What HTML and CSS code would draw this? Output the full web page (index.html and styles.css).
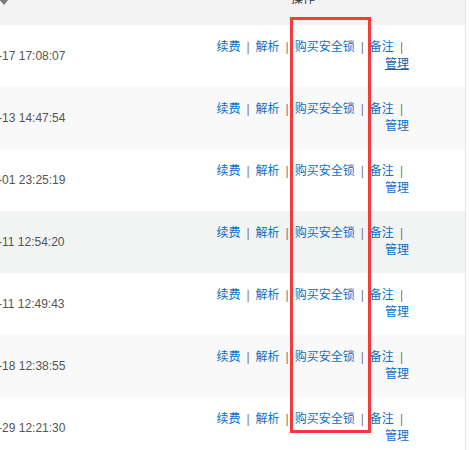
FILE: index.html
```html
<!DOCTYPE html>
<html lang="zh-CN">

<head>
    <meta charset="UTF-8">
    <title>域名列表</title>
    <link rel="stylesheet" href="styles.css">
</head>

<body>

    <div class="list">
        <!-- header, scrolled up and left -->
        <div class="list-head">
            <div class="col-date"><span class="caret"></span></div>
            <div class="col-ops"><span class="head-label">操作</span></div>
        </div>

        <div class="list-row">
            <div class="col-date">2019-08-17 17:08:07</div>
            <div class="col-ops"><a href="#">续费</a><span class="sep">|</span><a href="#">解析</a><span class="sep">|</span><a href="#">购买安全锁</a><span class="sep">|</span><a href="#">备注</a><span class="sep">|</span><a href="#" class="hover">管理</a></div>
        </div>
        <div class="list-row even">
            <div class="col-date">2019-08-13 14:47:54</div>
            <div class="col-ops"><a href="#">续费</a><span class="sep">|</span><a href="#">解析</a><span class="sep">|</span><a href="#">购买安全锁</a><span class="sep">|</span><a href="#">备注</a><span class="sep">|</span><a href="#">管理</a></div>
        </div>
        <div class="list-row">
            <div class="col-date">2019-08-01 23:25:19</div>
            <div class="col-ops"><a href="#">续费</a><span class="sep">|</span><a href="#">解析</a><span class="sep">|</span><a href="#">购买安全锁</a><span class="sep">|</span><a href="#">备注</a><span class="sep">|</span><a href="#">管理</a></div>
        </div>
        <div class="list-row active">
            <div class="col-date">2019-07-11 12:54:20</div>
            <div class="col-ops"><a href="#">续费</a><span class="sep">|</span><a href="#">解析</a><span class="sep">|</span><a href="#">购买安全锁</a><span class="sep">|</span><a href="#">备注</a><span class="sep">|</span><a href="#">管理</a></div>
        </div>
        <div class="list-row">
            <div class="col-date">2019-07-11 12:49:43</div>
            <div class="col-ops"><a href="#">续费</a><span class="sep">|</span><a href="#">解析</a><span class="sep">|</span><a href="#">购买安全锁</a><span class="sep">|</span><a href="#">备注</a><span class="sep">|</span><a href="#">管理</a></div>
        </div>
        <div class="list-row even">
            <div class="col-date">2019-06-18 12:38:55</div>
            <div class="col-ops"><a href="#">续费</a><span class="sep">|</span><a href="#">解析</a><span class="sep">|</span><a href="#">购买安全锁</a><span class="sep">|</span><a href="#">备注</a><span class="sep">|</span><a href="#">管理</a></div>
        </div>
        <div class="list-row">
            <div class="col-date">2019-05-29 12:21:30</div>
            <div class="col-ops"><a href="#">续费</a><span class="sep">|</span><a href="#">解析</a><span class="sep">|</span><a href="#">购买安全锁</a><span class="sep">|</span><a href="#">备注</a><span class="sep">|</span><a href="#">管理</a></div>
        </div>
    </div>

    <!-- red highlight drawn over the column -->
    <div class="highlight"></div>

</body>

</html>
```

FILE: styles.css
```css
body {
    margin: 0;
    background: #ffffff;
    font-family: "Liberation Sans", "Noto Sans CJK SC", sans-serif;
    font-size: 12px;
    overflow: hidden;
}

.list {
    width: 511px;
    margin-left: -46px;
    border-right: 1px solid #e3e3e3;
}

.list-head {
    display: flex;
    height: 25px;
    background: #f3f3f3;
}

.list-head .col-date {
    align-self: flex-start;
}

.caret {
    display: block;
    width: 0;
    height: 0;
    margin-left: 45px;
    margin-top: -1px;
    border-left: 5px solid transparent;
    border-right: 5px solid transparent;
    border-top: 6px solid #7a7a7a;
}

.head-label {
    display: block;
    margin-top: -8px;
    padding-left: 80px;
    line-height: 14px;
    color: #333333;
    text-align: left;
}

.list-row {
    display: flex;
    align-items: center;
    height: 62px;
    background: #ffffff;
}

.list-row.even {
    background: #f9f9f9;
}

.list-row.active {
    background: #f2f3f3;
}

.col-date {
    flex: 1;
    color: #555555;
    white-space: nowrap;
}

.col-ops {
    width: 198px;
    padding-right: 56px;
    text-align: right;
    line-height: 17px;
}

.list-head .col-ops {
    text-align: left;
}

.col-ops a {
    color: #0a6fc8;
    text-decoration: none;
    white-space: nowrap;
}

.col-ops a.hover {
    color: #1b5c9c;
    text-decoration: underline;
}

.sep {
    margin: 0 6px;
    color: #777777;
}

.highlight {
    position: absolute;
    left: 290px;
    top: 17px;
    width: 75px;
    height: 410px;
    border: 3px solid #f43a3a;
}
```
